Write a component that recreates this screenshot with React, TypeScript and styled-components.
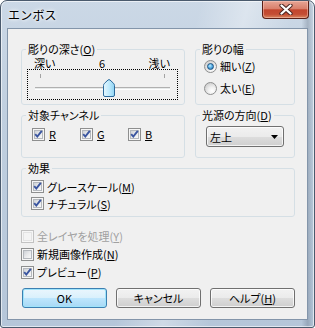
import React from "react";
import styled, { createGlobalStyle } from "styled-components";

const GlobalStyle = createGlobalStyle`
  html, body { margin: 0; padding: 0; background: #ffffff; }
  body {
    font-family: "Noto Sans CJK JP", "Noto Sans", sans-serif;
    font-size: 11px;
    color: #000;
    font-feature-settings: "palt";
  }
  * { box-sizing: border-box; }
`;

const Window = styled.div`
  width: 315px;
  height: 328px;
  display: flex;
  flex-direction: column;
  border: 1px solid #4a5a6d;
  border-radius: 7px 7px 3px 3px;
  overflow: hidden;
  background:
    linear-gradient(105deg, rgba(255,255,255,0) 50%, rgba(255,255,255,0.35) 62%, rgba(255,255,255,0) 74%),
    linear-gradient(to right, rgba(0,0,0,0) 96%, rgba(60,75,95,0.25) 98%, rgba(0,0,0,0) 100%),
    linear-gradient(to bottom, #cbd8e6 0%, #c0cfdf 35%, #b5c6d9 100%);
  box-shadow: inset 0 0 0 1px rgba(255,255,255,0.6);
`;

const TitleBar = styled.div`
  height: 27px;
  flex: none;
  display: flex;
  align-items: flex-start;
`;

const Title = styled.div`
  padding: 6px 0 0 7px;
  line-height: 16px;
  font-size: 12px;
  font-feature-settings: normal;
  letter-spacing: 0.2px;
  text-shadow: 0 0 5px #fff, 0 0 3px #fff;
`;

const CloseButton = styled.div`
  margin-left: auto;
  margin-right: 5px;
  width: 47px;
  height: 18px;
  border: 1px solid #5a1f16;
  border-top: none;
  border-radius: 0 0 4px 4px;
  background: linear-gradient(to bottom, #e6a595 0%, #d9806c 45%, #c2462e 52%, #c44d34 78%, #d8865f 100%);
  box-shadow: inset 0 0 0 1px rgba(255, 210, 200, 0.45);
  display: flex;
  align-items: center;
  justify-content: center;
`;

const Client = styled.div`
  flex: 1;
  margin: 0 6px 7px 6px;
  border: 1px solid #8395aa;
  background: #f0f0f0;
  padding: 13px 12px 0 13px;
  display: flex;
  flex-direction: column;
`;

const Grid = styled.div`
  display: grid;
  grid-template-columns: 164px 100px;
  grid-template-rows: 63px 50px 56px;
  column-gap: 10px;
  row-gap: 3px;
`;

const Group = styled.fieldset<{ $span?: boolean }>`
  margin: 0;
  padding: 0;
  min-width: 0;
  border: 1px solid #d5dfe5;
  border-radius: 3px;
  grid-column: ${(p) => (p.$span ? "1 / -1" : "auto")};
`;

const Legend = styled.legend`
  margin-left: 4px;
  padding: 0 2px;
  line-height: 14px;
  font-size: 11px;
`;

const Mn = styled.span`
  text-decoration: underline;
  text-underline-offset: 1px;
`;

const SliderLabels = styled.div`
  display: flex;
  justify-content: space-between;
  padding: 1px 14px 0 12px;
  height: 13px;
  line-height: 12px;
`;

const SliderBox = styled.div`
  position: relative;
  margin: 0 6px 0 5px;
  height: 31px;
  border: 1px dotted #000;
`;

const Ticks = styled.div`
  display: flex;
  justify-content: space-between;
  margin: 4px 12px 0 12px;
`;

const Tick = styled.span`
  width: 1px;
  height: 4px;
  background: #a3a3a3;
`;

const Track = styled.div`
  margin: 9px 7px 0 7px;
  height: 3px;
  border-top: 1px solid #b0b0b0;
  border-bottom: 1px solid #ffffff;
  background: #e7eaea;
`;

const ThumbSvg = styled.svg`
  position: absolute;
  top: 9px;
`;

const RadioList = styled.div`
  margin-top: -1px;
  padding-left: 8px;
`;

const OptionRow = styled.label<{ $h: number; $disabled?: boolean }>`
  display: flex;
  align-items: center;
  gap: 3px;
  height: ${(p) => p.$h}px;
  line-height: 14px;
  color: ${(p) => (p.$disabled ? "#a0a0a0" : "#000")};
`;

const RadioCircle = styled.span`
  flex: none;
  width: 13px;
  height: 13px;
  border-radius: 50%;
  border: 1px solid #8e8f8f;
  background: radial-gradient(circle at 65% 70%, #ffffff 0%, #f0f0f0 35%, #d2d2d2 75%, #c4c4c4 100%);
  display: flex;
  align-items: center;
  justify-content: center;
`;

const RadioDot = styled.span`
  width: 7px;
  height: 7px;
  border-radius: 50%;
  border: 1px solid #1c5180;
  background: radial-gradient(circle at 40% 35%, #c4ecfd 0%, #5cb3e8 45%, #1f6aa8 100%);
`;

const CheckBox = styled.span<{ $disabled?: boolean }>`
  position: relative;
  flex: none;
  width: 13px;
  height: 13px;
  padding: 1px;
  display: flex;
  border: 1px solid ${(p) => (p.$disabled ? "#c2c2c2" : "#8e8f8f")};
  background: #f6f6f6;
`;

const CheckInner = styled.span<{ $disabled?: boolean }>`
  flex: 1;
  border: 1px solid ${(p) => (p.$disabled ? "#e3e3e3" : "#b4b8bd")};
  background: ${(p) =>
    p.$disabled ? "#f4f4f4" : "linear-gradient(135deg, #cdd1d6 0%, #e8e9eb 50%, #f8f8f8 100%)"};
`;

const CheckMark = styled.svg`
  position: absolute;
  left: 0;
  top: 0;
`;

const ChannelRow = styled.div`
  display: flex;
  padding: 6px 0 0 10px;
`;

const ChannelItem = styled.label`
  display: flex;
  align-items: center;
  gap: 4px;
  width: 48px;
  height: 13px;
  line-height: 13px;
`;

const Combo = styled.div`
  margin: 4px 0 0 10px;
  width: 78px;
  height: 21px;
  border: 1px solid #707070;
  border-radius: 3px;
  background: linear-gradient(to bottom, #f2f2f2 0%, #ebebeb 50%, #dddddd 51%, #cfcfcf 100%);
  box-shadow: inset 0 0 0 1px rgba(255, 255, 255, 0.75);
  display: flex;
  align-items: center;
  justify-content: space-between;
  padding: 0 5px 0 3px;
  line-height: 14px;
`;

const EffectList = styled.div`
  padding: 3px 0 0 9px;
`;

const OptionList = styled.div`
  margin-top: 10px;
`;

const ButtonRow = styled.div`
  display: flex;
  gap: 9px;
  margin-top: 7px;
  padding-left: 1px;
`;

const Button = styled.div<{ $default?: boolean }>`
  width: 85px;
  height: 20px;
  border: 1px solid ${(p) => (p.$default ? "#3c7fb1" : "#707070")};
  border-radius: 3px;
  background: ${(p) =>
    p.$default
      ? "linear-gradient(to bottom, #eaf6fd 0%, #d9f0fc 50%, #bee6fd 51%, #a7d9f5 100%)"
      : "linear-gradient(to bottom, #f2f2f2 0%, #ebebeb 50%, #dddddd 51%, #cfcfcf 100%)"};
  box-shadow: ${(p) =>
    p.$default ? "inset 0 0 0 1px #9fe4fb" : "inset 0 0 0 1px rgba(255,255,255,0.75)"};
  display: flex;
  align-items: center;
  justify-content: center;
  line-height: 14px;
`;

function Check({ checked, disabled }: { checked?: boolean; disabled?: boolean }) {
  return (
    <CheckBox $disabled={disabled}>
      <CheckInner $disabled={disabled} />
      {checked && (
        <CheckMark width="11" height="11" viewBox="0 0 11 11">
          <path d="M2.2 5.2 L4.3 7.6 L8.8 1.8" fill="none" stroke="#3a55a0" strokeWidth="1.9" />
        </CheckMark>
      )}
    </CheckBox>
  );
}

function Thumb({ min, max, value }: { min: number; max: number; value: number }) {
  const frac = (value - min) / (max - min);
  const center = 12 + 124 * frac;
  return (
    <ThumbSvg width="12" height="18" viewBox="0 0 12 18" style={{ left: `${center - 6}px` }}>
      <defs>
        <linearGradient id="tg" x1="0" y1="0" x2="1" y2="0">
          <stop offset="0" stopColor="#e6f7fe" />
          <stop offset="0.5" stopColor="#bfeafd" />
          <stop offset="1" stopColor="#8fd3f2" />
        </linearGradient>
      </defs>
      <path
        d="M0.5 6.5 Q0.5 5.3 1.5 4.3 L5 1 Q6 0.2 7 1 L10.5 4.3 Q11.5 5.3 11.5 6.5 V16 Q11.5 17.5 10 17.5 H2 Q0.5 17.5 0.5 16 Z"
        fill="url(#tg)"
        stroke="#2c6a9c"
      />
    </ThumbSvg>
  );
}

export default function App() {
  return (
    <>
      <GlobalStyle />
      <Window>
        <TitleBar>
          <Title>エンボス</Title>
          <CloseButton>
            <svg width="14" height="11" viewBox="0 0 14 11">
              <path d="M2.5 1.5 L11.5 9.5 M11.5 1.5 L2.5 9.5" stroke="#4a2420" strokeWidth="4.2" strokeLinecap="round" />
              <path d="M2.5 1.5 L11.5 9.5 M11.5 1.5 L2.5 9.5" stroke="#ffffff" strokeWidth="2.3" strokeLinecap="round" />
            </svg>
          </CloseButton>
        </TitleBar>
        <Client>
          <Grid>
            <Group>
              <Legend>
                彫りの深さ(<Mn>O</Mn>)
              </Legend>
              <SliderLabels>
                <span>深い</span>
                <span>6</span>
                <span>浅い</span>
              </SliderLabels>
              <SliderBox>
                <Ticks>
                  <Tick />
                  <Tick />
                </Ticks>
                <Track />
                <Thumb min={1} max={10} value={6} />
              </SliderBox>
            </Group>
            <Group>
              <Legend>彫りの幅</Legend>
              <RadioList>
                <OptionRow $h={22}>
                  <RadioCircle>
                    <RadioDot />
                  </RadioCircle>
                  <span>
                    細い(<Mn>Z</Mn>)
                  </span>
                </OptionRow>
                <OptionRow $h={22}>
                  <RadioCircle />
                  <span>
                    太い(<Mn>E</Mn>)
                  </span>
                </OptionRow>
              </RadioList>
            </Group>
            <Group>
              <Legend>対象チャンネル</Legend>
              <ChannelRow>
                {["R", "G", "B"].map((c) => (
                  <ChannelItem key={c}>
                    <Check checked />
                    <Mn>{c}</Mn>
                  </ChannelItem>
                ))}
              </ChannelRow>
            </Group>
            <Group>
              <Legend>
                光源の方向(<Mn>D</Mn>)
              </Legend>
              <Combo>
                <span>左上</span>
                <svg width="7" height="4" viewBox="0 0 7 4">
                  <path d="M0 0 H7 L3.5 4 Z" fill="#000" />
                </svg>
              </Combo>
            </Group>
            <Group $span>
              <Legend>効果</Legend>
              <EffectList>
                <OptionRow $h={17}>
                  <Check checked />
                  <span>
                    グレースケール(<Mn>M</Mn>)
                  </span>
                </OptionRow>
                <OptionRow $h={17}>
                  <Check checked />
                  <span>
                    ナチュラル(<Mn>S</Mn>)
                  </span>
                </OptionRow>
              </EffectList>
            </Group>
          </Grid>
          <OptionList>
            <OptionRow $h={18} $disabled>
              <Check disabled />
              <span>
                全レイヤを処理(<Mn>Y</Mn>)
              </span>
            </OptionRow>
            <OptionRow $h={18}>
              <Check />
              <span>
                新規画像作成(<Mn>N</Mn>)
              </span>
            </OptionRow>
            <OptionRow $h={18}>
              <Check checked />
              <span>
                プレビュー(<Mn>P</Mn>)
              </span>
            </OptionRow>
          </OptionList>
          <ButtonRow>
            <Button $default>OK</Button>
            <Button>キャンセル</Button>
            <Button>
              ヘルプ(<Mn>H</Mn>)
            </Button>
          </ButtonRow>
        </Client>
      </Window>
    </>
  );
}
